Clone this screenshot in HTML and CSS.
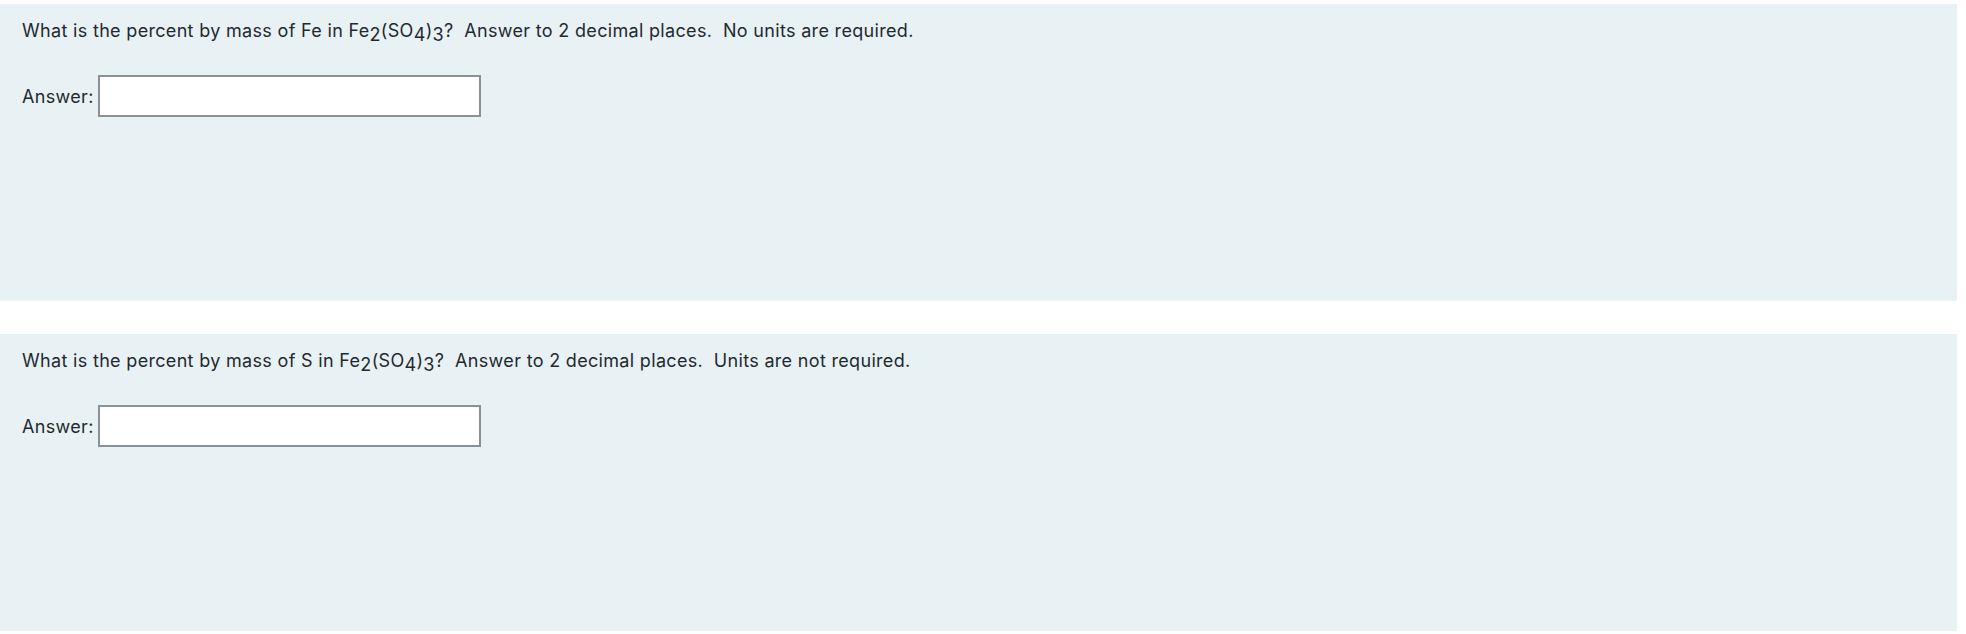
FILE: index.html
```html
<!DOCTYPE html>
<html>
<head>
<meta charset="utf-8">
<link rel="stylesheet" href="styles.css">
</head>
<body>
<div class="quiz">
  <section class="question">
    <p class="prompt">What is the percent by mass of Fe in Fe<sub>2</sub>(SO<sub>4</sub>)<sub>3</sub>?&nbsp; Answer to 2 decimal places.&nbsp; No units are required.</p>
    <div class="answer-row">
      <label class="answer-label">Answer:</label>
      <input class="answer-input" type="text">
    </div>
  </section>
  <section class="question">
    <p class="prompt">What is the percent by mass of S in Fe<sub>2</sub>(SO<sub>4</sub>)<sub>3</sub>?&nbsp; Answer to 2 decimal places.&nbsp; Units are not required.</p>
    <div class="answer-row">
      <label class="answer-label">Answer:</label>
      <input class="answer-input" type="text">
    </div>
  </section>
</div>
</body>
</html>
```
FILE: styles.css
```css
html, body {
  margin: 0;
  padding: 0;
  background: #ffffff;
}
body {
  font-family: Inter, "Liberation Sans", sans-serif;
  color: #1f2a30;
}
.quiz {
  display: flex;
  flex-direction: column;
  gap: 33px;
  padding-top: 4px;
  width: 1957px;
}
.question {
  background: #e8f1f4;
  height: 297px;
  box-sizing: border-box;
  padding: 13px 22px 0 22px;
}
.prompt {
  margin: 0;
  font-size: 18px;
  line-height: 27px;
  letter-spacing: 0.32px;
}
.prompt sub {
  font-size: 1em;
  vertical-align: -4px;
  line-height: 0;
}
.answer-row {
  display: flex;
  align-items: center;
  gap: 4px;
  margin-top: 31px;
}
.answer-label {
  font-size: 18px;
  letter-spacing: 0.32px;
}
.answer-input {
  width: 383px;
  height: 42px;
  box-sizing: border-box;
  border: 2px solid #8c9199;
  background: #ffffff;
  margin: 0;
  padding: 0 8px;
  outline: none;
}
```
